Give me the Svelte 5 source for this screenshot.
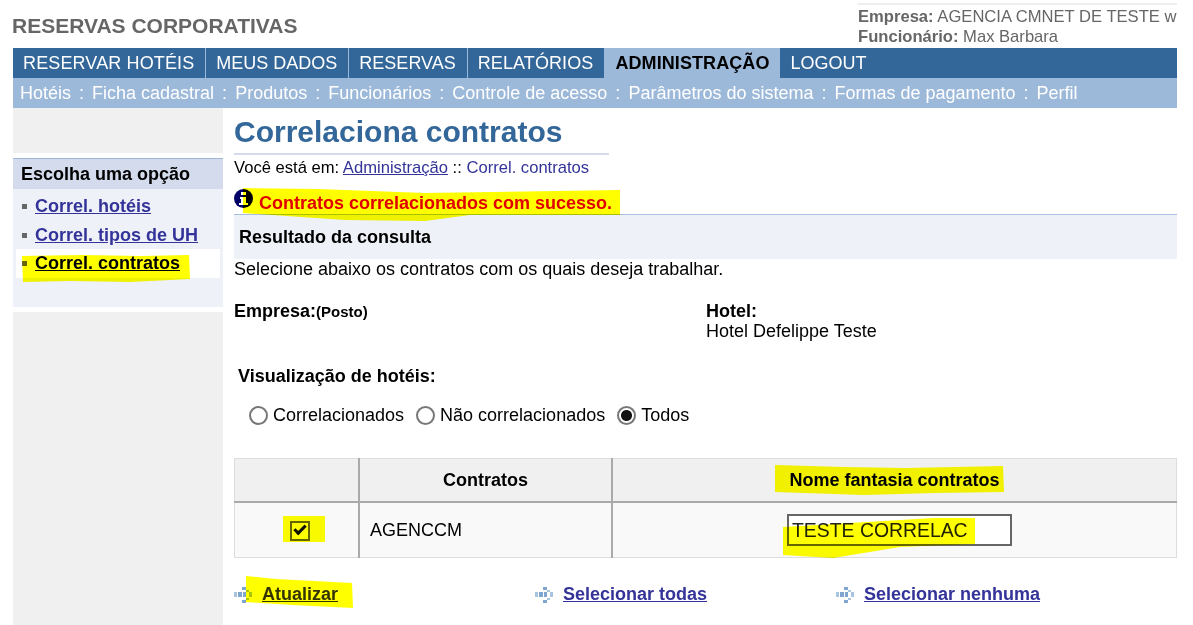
<script>
	const menu = ['RESERVAR HOTÉIS', 'MEUS DADOS', 'RESERVAS', 'RELATÓRIOS', 'ADMINISTRAÇÃO', 'LOGOUT'];
	const submenu = [
		'Hotéis',
		'Ficha cadastral',
		'Produtos',
		'Funcionários',
		'Controle de acesso',
		'Parâmetros do sistema',
		'Formas de pagamento',
		'Perfil'
	];
	const options = ['Correl. hotéis', 'Correl. tipos de UH', 'Correl. contratos'];
	const actions = ['Atualizar', 'Selecionar todas', 'Selecionar nenhuma'];
</script>

{#snippet arrow()}
	<svg class="arrow" width="20" height="16" viewBox="0 0 20 16">
		<rect x="0" y="5" width="3" height="5" fill="#a9c4de" />
		<rect x="4" y="5" width="4" height="5" fill="#7fa6cf" />
		<rect x="9" y="5" width="3" height="5" fill="#7fa6cf" />
		<rect x="8" y="0" width="4" height="3" fill="#7fa6cf" />
		<rect x="12" y="3" width="3" height="2" fill="#a9c4de" />
		<rect x="15" y="5" width="3" height="5" fill="#a9c4de" />
		<rect x="12" y="11" width="3" height="2" fill="#a9c4de" />
		<rect x="8" y="13" width="4" height="3" fill="#7fa6cf" />
	</svg>
{/snippet}

<div class="page">
	<header class="top">
		<div class="logo">RESERVAS CORPORATIVAS</div>
		<div class="account">
			<div><b>Empresa:</b> AGENCIA CMNET DE TESTE w</div>
			<div><b>Funcionário:</b> Max Barbara</div>
		</div>
	</header>

	<nav class="menu">
		{#each menu as item}
			<a href="#top" class:active={item === 'ADMINISTRAÇÃO'}>{item}</a>
		{/each}
	</nav>
	<nav class="submenu">
		{#each submenu as item, i}
			{#if i > 0}<span class="sep">:</span>{/if}
			<a href="#top">{item}</a>
		{/each}
	</nav>

	<div class="body">
		<aside class="side">
			<div class="side-top"></div>
			<div class="side-box">
				<h3>Escolha uma opção</h3>
				<ul>
					{#each options as option}
						<li class:current={option === 'Correl. contratos'}>
							<i></i><a href="#top">{option}</a>
						</li>
					{/each}
				</ul>
			</div>
			<div class="side-bottom"></div>
		</aside>

		<main class="content">
			<h1>Correlaciona contratos</h1>
			<p class="crumb">
				Você está em: <a href="#top">Administração</a> :: <span>Correl. contratos</span>
			</p>
			<div class="message">
				<svg width="19" height="19" viewBox="0 0 19 19">
					<circle cx="9.5" cy="9.5" r="9.5" fill="#000066" />
					<rect x="7" y="3" width="5" height="3" fill="#fff" />
					<path d="M6 8h6v6h2v2H5v-2h2v-4H6z" fill="#fff" />
				</svg>
				<strong>Contratos correlacionados com sucesso.</strong>
			</div>
			<h2 class="result">Resultado da consulta</h2>
			<p class="hint">Selecione abaixo os contratos com os quais deseja trabalhar.</p>

			<div class="info">
				<div class="company"><b>Empresa:</b><small>(Posto)</small></div>
				<div class="hotel"><b>Hotel:</b><br />Hotel Defelippe Teste</div>
			</div>

			<div class="view-title">Visualização de hotéis:</div>
			<div class="radios">
				<label><input type="radio" name="view" />Correlacionados</label>
				<label><input type="radio" name="view" />Não correlacionados</label>
				<label><input type="radio" name="view" checked />Todos</label>
			</div>

			<table>
				<thead>
					<tr>
						<th class="col-check"></th>
						<th class="col-name">Contratos</th>
						<th>Nome fantasia contratos</th>
					</tr>
				</thead>
				<tbody>
					<tr>
						<td class="center"><input class="check" type="checkbox" checked /></td>
						<td class="code">AGENCCM</td>
						<td class="center"><input class="fantasy" type="text" value="TESTE CORRELAC" /></td>
					</tr>
				</tbody>
			</table>

			<div class="actions">
				{#each actions as action}
					<div class="action">
						{@render arrow()}
						<a href="#top">{action}</a>
					</div>
				{/each}
			</div>
		</main>
	</div>

	<svg class="marker" width="1193" height="625" viewBox="0 0 1193 625">
		<g fill="#ffff00">
			<path d="M22 256l60 -1 60 1 47 -1 1 24 -60 3 -60 -1 -47 1z" />
			<path d="M243 188l75 1 107 4 195-3v25l-150 0-45 6-80-1-102-7z" />
			<rect x="283" y="516" width="42" height="26" />
			<path d="M246 576l30 3 76 4 1 25-60-3-47-3z" />
			<path d="M775 465l70 2 60 1 98-2 1 26-70 1-70 2-89-3z" />
			<path d="M783 527l84-5 66-4h42v26l-75 3-67 11-50-3z" />
		</g>
	</svg>
</div>

<style>
	:global(body) {
		background: #fff;
	}

	.page {
		position: relative;
		height: 625px;
		overflow: hidden;
		padding-left: 13px;
		width: 1164px;
		font-family: 'Liberation Sans', Arial, sans-serif;
		font-size: 18px;
		color: #000;
	}

	.top {
		display: flex;
		justify-content: space-between;
		height: 48px;
	}

	.logo {
		margin: 14px 0 0 -1px;
		font-size: 21px;
		line-height: 24px;
		font-weight: bold;
		color: #666;
		filter: blur(0.6px);
	}

	.account {
		width: 319px;
		height: 45px;
		margin-top: 3px;
		padding-top: 2px;
		border-top: 2px solid #eee;
		box-sizing: border-box;
		overflow: hidden;
		white-space: nowrap;
		font-size: 16.6px;
		line-height: 20px;
		color: #666;
	}

	.menu {
		display: flex;
		height: 30px;
		background: #336699;
	}

	.menu a {
		padding: 0 11px 0 10px;
		line-height: 30px;
		color: #fff;
		text-decoration: none;
		border-right: 1px solid #9db9da;
	}

	.menu a:first-child {
		letter-spacing: 0.13px;
	}

	.menu a:nth-child(4) {
		letter-spacing: 0.1px;
	}

	.menu a:last-child {
		border-right: 0;
	}

	.menu a.active {
		background: #9db9da;
		color: #000;
		font-weight: bold;
		letter-spacing: 0.08px;
		border-right: 0;
	}

	.submenu {
		display: flex;
		align-items: center;
		gap: 8px;
		height: 30px;
		padding-left: 7px;
		background: #9db9da;
		color: #fff;
	}

	.submenu a {
		color: #fff;
		text-decoration: none;
	}

	.body {
		display: flex;
		gap: 11px;
	}

	.side {
		flex: none;
		width: 210px;
		display: flex;
		flex-direction: column;
		height: 517px;
	}

	.side-top {
		height: 45px;
		background: #f0f0f0;
	}

	.side-box {
		height: 149px;
		margin-top: 5px;
		border-top: 1px solid #9db9da;
		background: #eef1f7;
		box-sizing: border-box;
	}

	.side-box h3 {
		margin: 0;
		height: 30px;
		padding-left: 8px;
		background: #d3dbec;
		font-size: 18px;
		line-height: 30px;
	}

	.side-box ul {
		list-style: none;
		margin: 0;
		padding: 3px 3px 0;
	}

	.side-box li {
		display: flex;
		align-items: center;
		gap: 8px;
		height: 29px;
		padding-left: 6px;
	}

	.side-box li i {
		width: 5px;
		height: 5px;
		background: #666;
	}

	.side-box li a {
		font-size: 18px;
		font-weight: bold;
		color: #333399;
	}

	.side-box li.current {
		margin-top: -1px;
		background: #fff;
	}

	.side-box li.current a {
		color: #000;
	}

	.side-bottom {
		flex: 1;
		margin-top: 5px;
		background: #f0f0f0;
	}

	.content {
		flex: 1;
		min-width: 0;
	}

	h1 {
		width: 375px;
		height: 47px;
		margin: 0;
		padding-top: 6px;
		box-sizing: border-box;
		border-bottom: 2px solid #d3dbec;
		font-size: 30px;
		line-height: 35px;
		color: #336699;
	}

	.crumb {
		margin: 3px 0 0;
		font-size: 16.6px;
		line-height: 20px;
	}

	.crumb a,
	.crumb span {
		color: #333399;
	}

	.message {
		display: flex;
		align-items: flex-start;
		gap: 6px;
		height: 31px;
		margin-top: 6px;
		padding-top: 5px;
		box-sizing: border-box;
		border-bottom: 1px solid #a9bfe0;
		font-size: 18px;
		color: #e00000;
	}

	.message strong {
		line-height: 28px;
	}

	.result {
		margin: 0;
		height: 44px;
		padding-left: 5px;
		background: #eef1f7;
		font-size: 18px;
		line-height: 44px;
	}

	.hint {
		margin: 0;
		line-height: 20px;
	}

	.info {
		display: flex;
		margin-top: 22px;
		line-height: 20px;
	}

	.company {
		width: 472px;
	}

	.company small {
		font-size: 15px;
		font-weight: bold;
	}

	.view-title {
		margin: 25px 0 0 4px;
		font-weight: bold;
		line-height: 20px;
	}

	.radios {
		display: flex;
		gap: 12px;
		margin: 19px 0 0 15px;
		line-height: 20px;
	}

	.radios label {
		display: flex;
		align-items: center;
		gap: 5px;
	}

	.radios input {
		appearance: none;
		width: 19px;
		height: 19px;
		margin: 0;
		box-sizing: border-box;
		border: 2px solid #777;
		border-radius: 50%;
		background: #fff;
	}

	.radios input:checked {
		background: radial-gradient(circle, #111 0 5px, #fff 6px);
	}

	table {
		width: 943px;
		margin-top: 33px;
		border-collapse: collapse;
		border: 1px solid #ddd;
		table-layout: fixed;
	}

	th,
	td {
		padding: 0;
		border-left: 2px solid #aaa;
		border-bottom: 2px solid #aaa;
	}

	th:first-child,
	td:first-child {
		border-left: 0;
	}

	tbody td {
		border-bottom: 0;
		height: 54px;
		background: #f9f9f9;
	}

	th {
		height: 42px;
		background: #f0f0f0;
	}

	.col-check {
		width: 123px;
	}

	.col-name {
		width: 251px;
	}

	.center {
		text-align: center;
	}

	.code {
		padding-left: 10px;
	}

	.check {
		appearance: none;
		position: relative;
		width: 20px;
		height: 20px;
		margin: 0 0 0 6px;
		box-sizing: border-box;
		border: 2px solid #666;
		background: #fff;
		vertical-align: middle;
	}

	.check:checked::after {
		content: '';
		position: absolute;
		left: 2px;
		top: 2px;
		width: 9px;
		height: 4px;
		border-left: 3px solid #111;
		border-bottom: 3px solid #111;
		transform: rotate(-45deg);
	}

	.fantasy {
		width: 225px;
		height: 32px;
		margin-left: 10px;
		padding: 0 3px;
		box-sizing: border-box;
		border: 2px solid #666;
		background: #fff;
		font: 19.4px 'Liberation Sans', Arial, sans-serif;
		color: #222;
		vertical-align: middle;
	}

	.actions {
		display: flex;
		margin-top: 26px;
	}

	.action {
		display: flex;
		align-items: center;
		gap: 8px;
		width: 301px;
	}

	.action a {
		font-weight: bold;
		color: #333399;
	}

	.arrow {
		flex: none;
	}

	.marker {
		position: absolute;
		top: 0;
		left: 0;
		pointer-events: none;
		mix-blend-mode: multiply;
	}
</style>
